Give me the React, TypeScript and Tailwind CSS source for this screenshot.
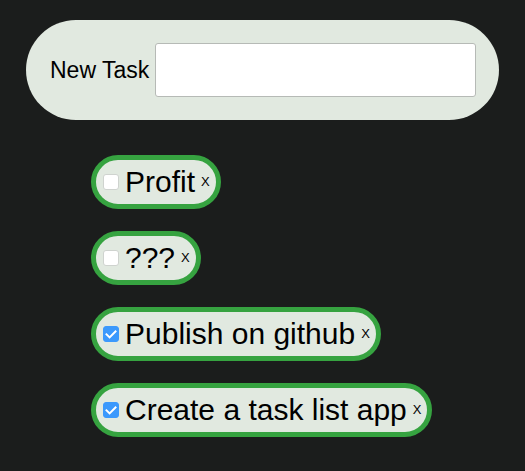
import { useState } from "react";
import type { FormEvent } from "react";

type Task = { id: number; title: string; done: boolean };

const initialTasks: Task[] = [
  { id: 4, title: "Profit", done: false },
  { id: 3, title: "???", done: false },
  { id: 2, title: "Publish on github", done: true },
  { id: 1, title: "Create a task list app", done: true },
];

function TaskItem({
  task,
  onToggle,
  onRemove,
}: {
  task: Task;
  onToggle: () => void;
  onRemove: () => void;
}) {
  const inputId = `task-${task.id}`;
  return (
    <li className="flex max-w-full items-center rounded-full border-5 border-[#36a340] bg-[#e1e9e0] py-1 pr-1.5 pl-[7px]">
      <span className="grid shrink-0 place-items-center">
        <input
          id={inputId}
          type="checkbox"
          checked={task.done}
          onChange={onToggle}
          className="col-start-1 row-start-1 size-4 appearance-none rounded-[3px] border border-[#cfd3cf] bg-white checked:border-[#3b99fc] checked:bg-[#3b99fc]"
        />
        {task.done && (
          <svg
            viewBox="0 0 16 16"
            className="pointer-events-none col-start-1 row-start-1 size-4"
            fill="none"
            stroke="white"
            strokeWidth="2"
            aria-hidden="true"
          >
            <path d="M2.8 7.6 6.6 11.4 13.2 4.8" />
          </svg>
        )}
      </span>
      <label htmlFor={inputId} className="ml-1.5 text-[30px] leading-9">
        {task.title}
      </label>
      <button
        type="button"
        onClick={onRemove}
        aria-label={`Remove ${task.title}`}
        className="ml-1.5 text-[13px] leading-4"
      >
        X
      </button>
    </li>
  );
}

export default function App() {
  const [tasks, setTasks] = useState(initialTasks);
  const [title, setTitle] = useState("");

  const addTask = (event: FormEvent) => {
    event.preventDefault();
    if (!title.trim()) return;
    setTasks([{ id: Date.now(), title: title.trim(), done: false }, ...tasks]);
    setTitle("");
  };

  return (
    <main className="min-h-screen bg-[#1b1d1c] px-[26px] py-5 font-['Liberation_Sans',Arial,sans-serif] text-black">
      <form
        onSubmit={addTask}
        className="flex items-center gap-1.5 rounded-full bg-[#e1e9e0] py-[23px] pr-[23px] pl-6"
      >
        <label htmlFor="new-task" className="shrink-0 text-[23px] leading-7">
          New Task
        </label>
        <input
          id="new-task"
          type="text"
          value={title}
          onChange={(event) => setTitle(event.target.value)}
          className="h-[54px] min-w-0 flex-1 rounded-[3px] border border-[#b6bab6] bg-white px-2 text-[23px] outline-none"
        />
      </form>
      <ul className="mt-[35px] flex flex-col items-start gap-[22px] pl-[65px]">
        {tasks.map((task) => (
          <TaskItem
            key={task.id}
            task={task}
            onToggle={() =>
              setTasks(
                tasks.map((t) =>
                  t.id === task.id ? { ...t, done: !t.done } : t,
                ),
              )
            }
            onRemove={() => setTasks(tasks.filter((t) => t.id !== task.id))}
          />
        ))}
      </ul>
    </main>
  );
}
